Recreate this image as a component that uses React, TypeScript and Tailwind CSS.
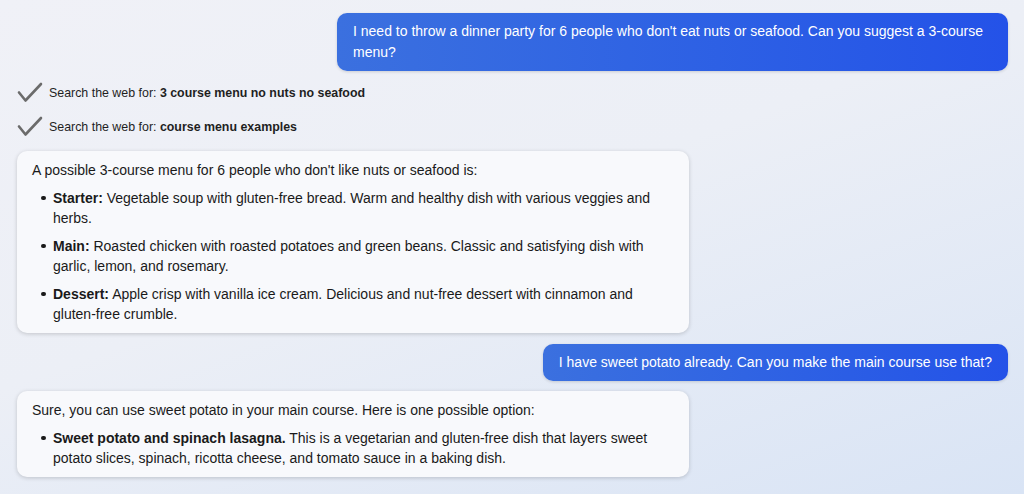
import React from "react";

function Check() {
  return (
    <svg width="26" height="22" viewBox="0 0 26 22" className="shrink-0">
      <path d="M2 10.5 L8.5 18.5 L24 2" fill="none" stroke="#6b6b6b" strokeWidth="2.6" strokeLinecap="round" strokeLinejoin="round" />
    </svg>
  );
}

function UserBubble({ children, className = "" }: { children: React.ReactNode; className?: string }) {
  return (
    <div className="flex justify-end pr-4">
      <div
        className={
          "rounded-[10px] bg-gradient-to-r from-[#3b70df] to-[#2452e8] px-4 py-2 text-[14px] leading-[21px] text-white shadow-[0_1px_3px_rgba(0,0,0,0.15)] " +
          className
        }
      >
        {children}
      </div>
    </div>
  );
}

function BotCard({ children }: { children: React.ReactNode }) {
  return (
    <div className="ml-[17px] w-[672px] rounded-[10px] bg-[#f8f9fc] px-[15px] pt-[9px] pb-[9px] text-[14px] leading-[20px] text-[#1a1a1a] shadow-[0_1px_4px_rgba(0,0,0,0.18)]">
      {children}
    </div>
  );
}

function Item({ label, children }: { label: string; children: React.ReactNode }) {
  return (
    <li className="flex">
      <div className="flex h-[20px] w-[21px] shrink-0 items-center pl-[9px]">
        <div className="h-[4.5px] w-[4.5px] rounded-full bg-[#1a1a1a]" />
      </div>
      <div>
        <b className="font-bold">{label}</b> {children}
      </div>
    </li>
  );
}

export default function App() {
  return (
    <div
      className="h-[494px] w-[1024px] overflow-hidden bg-[linear-gradient(160deg,#f0f1f7_0%,#eceff6_45%,#d9e4f5_100%)] pt-[13px]"
      style={{ fontFamily: '"Liberation Sans", Arial, Helvetica, sans-serif' }}
    >
      <UserBubble className="w-[671px]">
        I need to throw a dinner party for 6 people who don't eat nuts or seafood. Can you suggest a 3-course menu?
      </UserBubble>

      <div className="mt-[11px] flex flex-col gap-[12px] pl-[17px] text-[12.4px] text-[#1f1f1f]">
        <div className="flex h-[22px] items-center gap-[6px]">
          <Check />
          <span>
            Search the web for: <b className="font-bold">3 course menu no nuts no seafood</b>
          </span>
        </div>
        <div className="flex h-[22px] items-center gap-[6px]">
          <Check />
          <span>
            Search the web for: <b className="font-bold">course menu examples</b>
          </span>
        </div>
      </div>

      <div className="mt-[13px]">
        <BotCard>
          <p>A possible 3-course menu for 6 people who don't like nuts or seafood is:</p>
          <ul className="mt-[8px] flex flex-col gap-[8px]">
            <Item label="Starter:">
              Vegetable soup with gluten-free bread. Warm and healthy dish with various veggies and herbs.
            </Item>
            <Item label="Main:">
              Roasted chicken with roasted potatoes and green beans. Classic and satisfying dish with garlic, lemon, and rosemary.
            </Item>
            <Item label="Dessert:">
              Apple crisp with vanilla ice cream. Delicious and nut-free dessert with cinnamon and gluten-free crumble.
            </Item>
          </ul>
        </BotCard>
      </div>

      <div className="mt-[11px]">
        <UserBubble>I have sweet potato already. Can you make the main course use that?</UserBubble>
      </div>

      <div className="mt-[10px]">
        <BotCard>
          <p>Sure, you can use sweet potato in your main course. Here is one possible option:</p>
          <ul className="mt-[8px] flex flex-col gap-[8px]">
            <Item label="Sweet potato and spinach lasagna.">
              This is a vegetarian and gluten-free dish that layers sweet potato slices, spinach, ricotta cheese, and tomato sauce in a baking dish.
            </Item>
          </ul>
        </BotCard>
      </div>
    </div>
  );
}
